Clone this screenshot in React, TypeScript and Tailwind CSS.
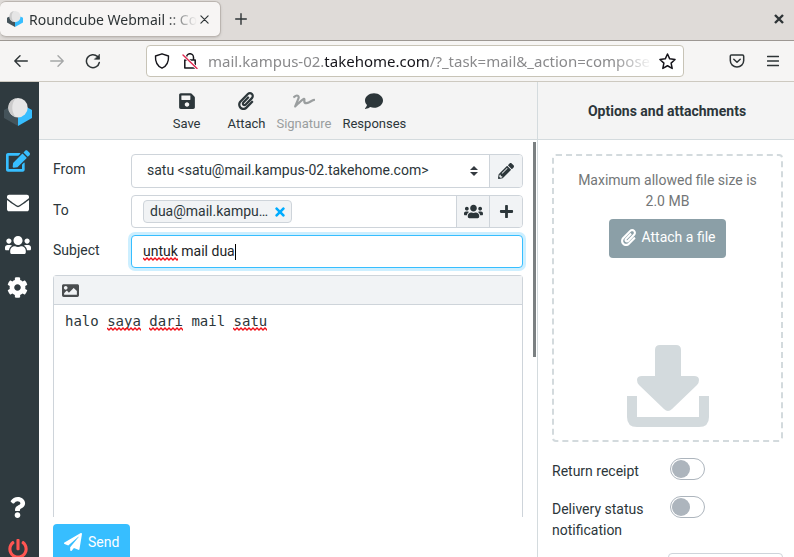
import type { ReactNode } from "react";
import {
  FaCog,
  FaComment,
  FaEdit,
  FaEnvelope,
  FaImage,
  FaPaperPlane,
  FaPaperclip,
  FaPencilAlt,
  FaPlus,
  FaPowerOff,
  FaQuestion,
  FaSave,
  FaSignature,
  FaTimes,
  FaUsers,
} from "react-icons/fa";

const stroke = {
  fill: "none",
  stroke: "currentColor",
  strokeLinecap: "round" as const,
  strokeLinejoin: "round" as const,
};

function Logo({ className }: { className: string }) {
  return (
    <svg viewBox="0 0 28 28" className={className} aria-hidden="true">
      <path d="M0 12 4.500 9.500 14 19.500V28L0 20z" fill="#44535a" />
      <path d="M28 12 23.500 9.500 14 19.500V28l14-8z" fill="#37beff" />
      <circle cx="14" cy="9.700" r="9.700" fill="#e6e6e6" />
      <path d="M12 .2a9.700 9.700 0 0 0 0 19C7 14 7 5 12 .2z" fill="#cbcbcb" />
    </svg>
  );
}

function Squiggle({ className }: { className: string }) {
  const points = Array.from({ length: 60 }, (_, i) => `${i * 2},${i % 2 ? 3 : 1}`).join(" ");
  return (
    <svg className={`pointer-events-none absolute h-1 ${className}`} aria-hidden="true">
      <polyline points={points} fill="none" stroke="#f01018" strokeWidth="1.4" />
    </svg>
  );
}

function BrowserButton({ label, className = "", children }: { label: string; className?: string; children: ReactNode }) {
  return (
    <button
      type="button"
      aria-label={label}
      className={`flex size-9 shrink-0 items-center justify-center text-[#2e3436] ${className}`}
    >
      {children}
    </button>
  );
}

function TabStrip() {
  return (
    <div className="flex h-[41px] shrink-0 items-start border-b border-[#9d9893] bg-[#dfdbd8] pt-px">
      <div className="flex h-9 w-[221px] items-center rounded-md border border-l-0 border-[#bbb5b0] bg-[#f7f5f4] pl-[7px] pr-2 shadow-sm">
        <Logo className="size-4 shrink-0" />
        <span className="ml-1.5 whitespace-nowrap font-['Noto_Sans',sans-serif] text-[14px] text-[#2e3436] [mask-image:linear-gradient(to_left,transparent,black_32px)]">
          Roundcube Webmail :: Co
        </span>
        <button type="button" aria-label="Close tab" className="ml-auto flex size-4 items-center justify-center text-[#2e3436]">
          <svg viewBox="0 0 10 10" className="size-[9px]" {...stroke} strokeWidth="1.3">
            <path d="M1 1l8 8M9 1 1 9" />
          </svg>
        </button>
      </div>
      <BrowserButton label="New tab" className="ml-0.5">
        <svg viewBox="0 0 12 12" className="size-3" {...stroke} strokeWidth="1.4">
          <path d="M6 .7v10.6M.7 6h10.6" />
        </svg>
      </BrowserButton>
      <BrowserButton label="Close window" className="ml-auto -mr-[3px]">
        <svg viewBox="0 0 10 10" className="size-[10px]" {...stroke} strokeWidth="2.4" strokeLinecap="butt">
          <path d="M1 1l8 8M9 1 1 9" />
        </svg>
      </BrowserButton>
    </div>
  );
}

function AddressBar() {
  return (
    <div className="flex h-[41px] shrink-0 items-center border-b border-[#cdc9c0] bg-[#f6f5f4] pl-[3px] pr-[3px]">
      <BrowserButton label="Back">
        <svg viewBox="0 0 14 12" className="h-3 w-3.5" {...stroke} strokeWidth="1.4">
          <path d="M13.3 6H.8M6 .8.8 6 6 11.2" />
        </svg>
      </BrowserButton>
      <BrowserButton label="Forward" className="opacity-40">
        <svg viewBox="0 0 14 12" className="h-3 w-3.5" {...stroke} strokeWidth="1.4">
          <path d="M.7 6h12.5M8 .8 13.2 6 8 11.2" />
        </svg>
      </BrowserButton>
      <BrowserButton label="Reload">
        <svg viewBox="0 0 16 16" className="size-4" {...stroke} strokeWidth="1.5">
          <path d="M14.300 9.500A6.500 6.500 0 1 1 12.500 3.500L14 5" />
          <path d="M14.500 1.500V6.300H9.700z" fill="currentColor" strokeWidth=".6" />
        </svg>
      </BrowserButton>
      <div className="ml-[35px] flex h-8 min-w-0 flex-1 items-center rounded-[4px] border border-[#c8c4b7] bg-white pl-[7px] pr-[7px]">
        <svg viewBox="0 0 16 16" className="size-4 shrink-0 text-[#15141a]" {...stroke} strokeWidth="1.4">
          <path d="M8 .8 14.500 3c.3 5-1.500 10-6.500 12.200C3 13 1.200 8 1.500 3z" />
        </svg>
        <svg viewBox="0 0 16 16" className="ml-3 size-4 shrink-0 text-[#15141a]" {...stroke} strokeWidth="1.5">
          <path d="M4.500 7V4.200a3.500 3.500 0 0 1 7 0V7M2.800 7h10.400v8H2.800z" />
          <path d="M1.500 2.500l13 12.500" stroke="#fff" strokeWidth="3" />
          <path d="M1 2l14 13.500" stroke="#e22850" strokeWidth="1.4" />
        </svg>
        <div className="ml-2.5 min-w-0 flex-1 whitespace-nowrap font-['Noto_Sans',sans-serif] text-[15px] text-[#8a8a8c] [mask-image:linear-gradient(to_left,transparent,black_40px)]">
          mail.kampus-02.<span className="text-[#15141a]">takehome.com</span>/?_task=mail&amp;_action=compose
        </div>
        <button type="button" aria-label="Bookmark this page" className="ml-1.5 shrink-0 text-[#15141a]">
          <svg viewBox="0 0 16 16" className="size-[17px]" {...stroke} strokeWidth="1.4">
            <path d="M8 .9l2.100 4.600 5 .6-3.700 3.400 1 5L8 12l-4.400 2.500 1-5L.9 6.100l5-.6z" />
          </svg>
        </button>
      </div>
      <BrowserButton label="Save to Pocket" className="ml-[35px]">
        <svg viewBox="0 0 16 14" className="h-3.5 w-4" {...stroke} strokeWidth="1.5">
          <path d="M2.500 1h11c.7 0 1.200.5 1.200 1.200V6.500a6.700 6.500 0 0 1-13.400 0V2.200C1.300 1.500 1.800 1 2.500 1zM4.800 5.300 8 8.300l3.200-3" />
        </svg>
      </BrowserButton>
      <BrowserButton label="Menu">
        <svg viewBox="0 0 12 12" className="size-3" {...stroke} strokeWidth="1.3">
          <path d="M.5 1.500h11M.5 6h11M.5 10.500h11" />
        </svg>
      </BrowserButton>
    </div>
  );
}

function NavItem({ label, className = "text-white", children }: { label: string; className?: string; children: ReactNode }) {
  return (
    <a href="#" aria-label={label} className={`flex h-[42px] items-center justify-center pr-1 ${className}`}>
      {children}
    </a>
  );
}

function Sidebar() {
  return (
    <nav className="flex w-[39px] shrink-0 flex-col bg-[#2f3a3f]">
      <div className="flex h-[58px] items-center justify-center pr-[3px] pt-0.5">
        <Logo className="size-7" />
      </div>
      <NavItem label="Compose" className="text-[#37beff]">
        <FaEdit className="size-6" />
      </NavItem>
      <NavItem label="Mail">
        <FaEnvelope className="size-[22px]" />
      </NavItem>
      <NavItem label="Contacts">
        <FaUsers className="size-[26px]" />
      </NavItem>
      <NavItem label="Settings">
        <FaCog className="size-[21px]" />
      </NavItem>
      <div className="mt-auto -mb-[13px]">
        <NavItem label="About">
          <FaQuestion className="size-[21px]" />
        </NavItem>
        <NavItem label="Logout" className="text-[#ff5552]">
          <FaPowerOff className="size-5" />
        </NavItem>
      </div>
    </nav>
  );
}

function ToolButton({ label, className = "text-[#2c363a]", disabled, children }: { label: string; className?: string; disabled?: boolean; children: ReactNode }) {
  return (
    <button type="button" disabled={disabled} className={`flex flex-col items-center gap-[3px] text-[13px] leading-5 ${className}`}>
      <span className="flex h-5 items-center">{children}</span>
      {label}
    </button>
  );
}

const addon = "flex w-[33px] shrink-0 items-center justify-center border-l border-[#ced4da] bg-[#f1f3f5] text-[#2c363a]";
const box = "flex min-w-0 flex-1 overflow-hidden rounded-[4px] border border-[#ced4da] bg-white";
const rowLabel = "w-[78px] shrink-0 pt-[5px] leading-[21px]";

function ComposeForm() {
  return (
    <form className="relative flex min-h-0 flex-1 flex-col gap-[7px] pl-3.5 pr-3.5 pt-3.5">
      <div className="flex h-[34px] shrink-0">
        <label htmlFor="from" className={rowLabel}>From</label>
        <div className={box}>
          <div className="relative flex min-w-0 flex-1">
            <select id="from" className="w-full appearance-none bg-transparent pl-[15px] pr-8 pb-0.5">
              <option>satu &lt;satu@mail.kampus-02.takehome.com&gt;</option>
            </select>
            <svg viewBox="0 0 8 10" className="pointer-events-none absolute right-[11px] top-[11px] h-2.5 w-2" fill="#343a40">
              <path d="M4 0l4 4H0zM4 10 0 6h8z" />
            </svg>
          </div>
          <button type="button" aria-label="Edit identities" className={addon}>
            <FaPencilAlt className="size-4" />
          </button>
        </div>
      </div>

      <div className="flex h-[33px] shrink-0">
        <label htmlFor="to" className={rowLabel}>To</label>
        <div className={box}>
          <div className="flex min-w-0 flex-1 items-center pl-[11px]">
            <span className="flex h-[23px] shrink-0 items-center gap-[5px] rounded-[4px] border border-[#ced4da] bg-[#f1f3f5] pl-1.5 pr-1">
              dua@mail.kampu…
              <button type="button" aria-label="Remove recipient" className="text-[#00acff]">
                <FaTimes className="size-3.5" />
              </button>
            </span>
            <input id="to" className="h-full min-w-0 flex-1 px-1 outline-none" />
          </div>
          <button type="button" aria-label="Add contact" className={addon}>
            <FaUsers className="size-[19px]" />
          </button>
          <button type="button" aria-label="Add Cc" className={addon}>
            <FaPlus className="size-[15px]" />
          </button>
        </div>
      </div>

      <div className="flex h-[33px] shrink-0">
        <label htmlFor="subject" className={rowLabel}>Subject</label>
        <div className="relative flex min-w-0 flex-1 rounded-[4px] border border-[#37beff] bg-white shadow-[0_0_0_3px_#cdefff]">
          <input id="subject" defaultValue="untuk mail dua" spellCheck={false} className="w-full bg-transparent px-[11px] text-[#1c2427] outline-none" />
          <Squiggle className="left-[11px] top-[21px] w-[35px]" />
          <span className="absolute left-[103px] top-2 h-4 w-px bg-black" />
        </div>
      </div>

      <div className="flex min-h-0 flex-1 flex-col rounded-t-[4px] border border-b-0 border-[#ced4da]">
        <div className="flex h-[29px] shrink-0 items-center border-b border-[#ced4da] bg-[#f1f3f5] pl-2">
          <button type="button" aria-label="Switch to HTML editor" className="text-[#4a4d4f]">
            <FaImage className="size-[17px]" />
          </button>
        </div>
        <div className="relative min-h-0 flex-1">
          <textarea
            aria-label="Message body"
            spellCheck={false}
            defaultValue="halo saya dari mail satu"
            className="block size-full resize-none bg-transparent px-[11px] py-1.5 font-['DejaVu_Sans_Mono',monospace] text-[14px] leading-[21px] outline-none"
          />
          <Squiggle className="left-[53px] top-[22px] w-[34px]" />
          <Squiggle className="left-[95px] top-[22px] w-[34px]" />
          <Squiggle className="left-[179px] top-[22px] w-[34px]" />
        </div>
      </div>

      <div className="h-[33px] shrink-0">
        <button type="submit" className="flex h-9 items-center gap-1.5 rounded-[4px] bg-[#37beff] px-[11px] text-white">
          <FaPaperPlane className="size-[18px]" />
          Send
        </button>
      </div>
      <div className="absolute right-px top-0.5 h-[215px] w-[3px] bg-[#7b8082]" />
    </form>
  );
}

function Toggle({ id }: { id: string }) {
  return (
    <input
      id={id}
      type="checkbox"
      className="h-[22px] w-[35px] shrink-0 appearance-none rounded-full border border-[#adb5bd] bg-white p-px before:block before:size-[18px] before:rounded-full before:bg-[#adb5bd] checked:before:ml-auto"
    />
  );
}

function OptionsPanel() {
  return (
    <aside className="flex w-[257px] shrink-0 flex-col border-l border-[#d4dbde]">
      <h2 className="flex h-[58px] shrink-0 items-center justify-center border-b border-[#d4dbde] bg-[#f4f4f4] pl-0.5 pt-0.5 font-bold">
        Options and attachments
      </h2>
      <div className="flex flex-col pl-3.5 pr-[11px] pt-3.5">
        <div className="flex h-[288px] flex-col items-center rounded-[4px] border-2 border-dashed border-[#d3dadd] px-5 pt-3.5 text-center leading-[21px] text-[#737677]">
          <p>Maximum allowed file size is 2.0 MB</p>
          <button type="button" className="mt-[7px] flex h-[39px] items-center gap-[5px] rounded-[4px] bg-[#8b9fa7] px-[11px] pb-0.5 text-white">
            <FaPaperclip className="size-[17px]" />
            Attach a file
          </button>
          <svg viewBox="0 0 82 82" className="mb-[13px] mt-auto size-[82px] shrink-0" fill="#d3dadd" aria-hidden="true">
            <path d="M33 0h16q5 0 5 5v26h13q5 0 5 4 0 3-2 5L45 64q-4 4-8 0L12 40q-2-2-2-5 0-4 5-4h13V5q0-5 5-5z" />
            <path d="M0 51h10v21h62V51h10v21q0 10-10 10H10Q0 82 0 72z" />
          </svg>
        </div>
        <div className="mt-4 flex flex-col gap-4 leading-[21px]">
          <div className="flex h-[22px] items-start">
            <label htmlFor="receipt" className="w-[118px] pt-[3px]">Return receipt</label>
            <Toggle id="receipt" />
          </div>
          <div className="flex items-start">
            <label htmlFor="dsn" className="w-[118px] pt-[3px]">Delivery status notification</label>
            <Toggle id="dsn" />
          </div>
        </div>
        <select aria-label="Priority" className="mt-3 ml-[116px] h-[34px] shrink-0 appearance-none rounded-[4px] border border-[#ced4da] px-3">
          <option>Normal</option>
        </select>
      </div>
    </aside>
  );
}

export default function App() {
  return (
    <div className="flex h-screen flex-col overflow-hidden bg-white font-[Roboto,sans-serif] text-[14px] text-[#2c363a]">
      <TabStrip />
      <AddressBar />
      <div className="flex min-h-0 flex-1 overflow-hidden">
        <Sidebar />
        <main className="flex min-w-0 flex-1 flex-col">
          <div className="flex h-[58px] shrink-0 items-start justify-center gap-[11px] border-b border-[#d4dbde] bg-[#f4f4f4] pl-[3px] pt-[9px]">
            <ToolButton label="Save" className="mr-4 text-[#2c363a]">
              <FaSave className="size-[18px]" />
            </ToolButton>
            <ToolButton label="Attach">
              <FaPaperclip className="size-[18px]" />
            </ToolButton>
            <ToolButton label="Signature" className="text-[#9a9e9f]" disabled>
              <FaSignature className="size-[22px]" />
            </ToolButton>
            <ToolButton label="Responses">
              <FaComment className="size-[18px]" />
            </ToolButton>
          </div>
          <ComposeForm />
        </main>
        <OptionsPanel />
      </div>
    </div>
  );
}
